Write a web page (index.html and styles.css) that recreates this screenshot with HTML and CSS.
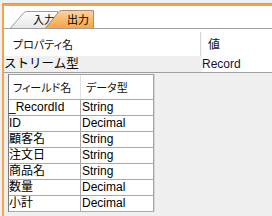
FILE: index.html
```html
<!DOCTYPE html>
<html lang="ja">
<head>
<meta charset="utf-8">
<link rel="stylesheet" href="styles.css">
</head>
<body>
<div class="frame">
  <div class="frame-inner">
    <div class="tabstrip">
      <div class="tab tab-in">
        <svg class="tab-bg" width="48" height="17" viewBox="0 0 48 17">
          <defs>
            <linearGradient id="gin" x1="0" y1="0" x2="0" y2="1">
              <stop offset="0" stop-color="#ffffff"/>
              <stop offset="1" stop-color="#e6e6e6"/>
            </linearGradient>
          </defs>
          <path d="M0.5 17 L14 1.5 Q15 0.5 16.5 0.5 L47.5 0.5 L47.5 17" fill="url(#gin)" stroke="#9c9c9c"/>
        </svg>
        <span class="tab-label">入力</span>
      </div>
      <div class="tab tab-out">
        <svg class="tab-bg" width="49" height="18" viewBox="0 0 49 18">
          <defs>
            <linearGradient id="gout" x1="0" y1="0" x2="0" y2="1">
              <stop offset="0" stop-color="#fed2a0"/>
              <stop offset="1" stop-color="#f8a443"/>
            </linearGradient>
          </defs>
          <path d="M0.5 18 L14 1.5 Q15 0.5 16.5 0.5 L48.5 0.5 L48.5 18" fill="url(#gout)" stroke="#a8906e"/>
        </svg>
        <span class="tab-label">出力</span>
      </div>
    </div>
    <div class="pg">
      <div class="pg-head">
        <div class="pg-name head-text">プロパティ名</div>
        <div class="pg-sep"></div>
        <div class="pg-val head-text">値</div>
      </div>
      <div class="pg-row">
        <div class="pg-cell-name">ストリーム型</div>
        <div class="pg-cell-val">Record</div>
      </div>
    </div>
    <div class="fields">
      <div class="ftable">
        <div class="fhead">
          <div class="fh1 head-text">フィールド名</div>
          <div class="fh2 head-text">データ型</div>
        </div>
        <div class="frow"><div class="c1">_RecordId</div><div class="c2">String</div></div>
        <div class="frow"><div class="c1">ID</div><div class="c2">Decimal</div></div>
        <div class="frow"><div class="c1">顧客名</div><div class="c2">String</div></div>
        <div class="frow"><div class="c1">注文日</div><div class="c2">String</div></div>
        <div class="frow"><div class="c1">商品名</div><div class="c2">String</div></div>
        <div class="frow"><div class="c1">数量</div><div class="c2">Decimal</div></div>
        <div class="frow"><div class="c1">小計</div><div class="c2">Decimal</div></div>
      </div>
    </div>
  </div>
</div>
</body>
</html>
```
FILE: styles.css
```css
html, body {
  margin: 0;
  padding: 0;
  height: 100%;
}
body {
  background: #f0f0f0;
  font-family: "Liberation Sans", "Noto Sans CJK JP", sans-serif;
  font-size: 12px;
  color: #000;
  overflow: hidden;
}
.frame {
  margin: 3px 0 0 2px;
  border-top: 1px solid #a7a7a7;
}
.frame-inner {
  border-top: 2px solid #f6a44c;
  border-left: 2px solid #f6a44c;
  height: 210px;
}
.tabstrip {
  height: 22px;
  background: #fff;
  border-bottom: 1px solid #a0a0a0;
  display: flex;
  align-items: flex-end;
  padding-left: 6px;
}
.tab {
  display: grid;
}
.tab > * {
  grid-area: 1 / 1;
}
.tab-bg {
  display: block;
}
.tab-label {
  font-size: 11px;
  line-height: 14px;
  align-self: center;
  padding-top: 1px;
}
.tab-in .tab-label {
  padding-left: 23px;
}
.tab-out {
  margin-left: -13px;
}
.tab-out .tab-label {
  padding-left: 22px;
}
.pg {
  background: #fff;
  border-bottom: 1px solid #a0a0a0;
}
.head-text {
  font-size: 11px;
  font-feature-settings: "palt";
  color: #111;
}
.pg-head {
  display: grid;
  grid-template-columns: 196px 2px 1fr;
  height: 27px;
}
.pg-name {
  padding: 9px 0 0 9px;
  line-height: 15px;
}
.pg-sep {
  margin-top: 3px;
  background: linear-gradient(to right, #d8d8d8 50%, #f4f4f4 50%);
}
.pg-val {
  padding: 9px 0 0 6px;
  line-height: 15px;
  font-size: 12px;
}
.pg-row {
  display: grid;
  grid-template-columns: 198px 1fr;
  height: 16px;
  line-height: 16px;
}
.pg-cell-name {
  background: #f0f0f0;
  font-size: 12.5px;
}
.pg-cell-val {
  background: #fff;
  color: #10103a;
}
.fields {
  padding: 1px 0 0 4px;
}
.ftable {
  width: 146px;
  box-sizing: border-box;
  background: #fff;
  border-top: 1px solid #a0a0a0;
  border-left: 1px solid #7a7a7a;
  border-right: 1px solid #a8a8a8;
  box-shadow: 1px 0 0 #d4d4d4;
}
.fhead {
  display: grid;
  grid-template-columns: 72px 1fr;
  height: 25px;
  box-sizing: border-box;
  border-bottom: 1px solid #a8a8a8;
}
.fh1, .fh2 {
  line-height: 15px;
  padding-top: 6px;
}
.fh1 {
  padding-left: 4px;
  border-right: 1px solid #e2e2e2;
}
.fh2 {
  padding-left: 5px;
}
.frow {
  display: grid;
  grid-template-columns: 72px 1fr;
  height: 16px;
  box-sizing: border-box;
  border-bottom: 1px solid #a8a8a8;
  line-height: 15px;
}
.c1 {
  border-right: 1px solid #a8a8a8;
  white-space: nowrap;
}
.c2 {
  padding-left: 1px;
}
```
